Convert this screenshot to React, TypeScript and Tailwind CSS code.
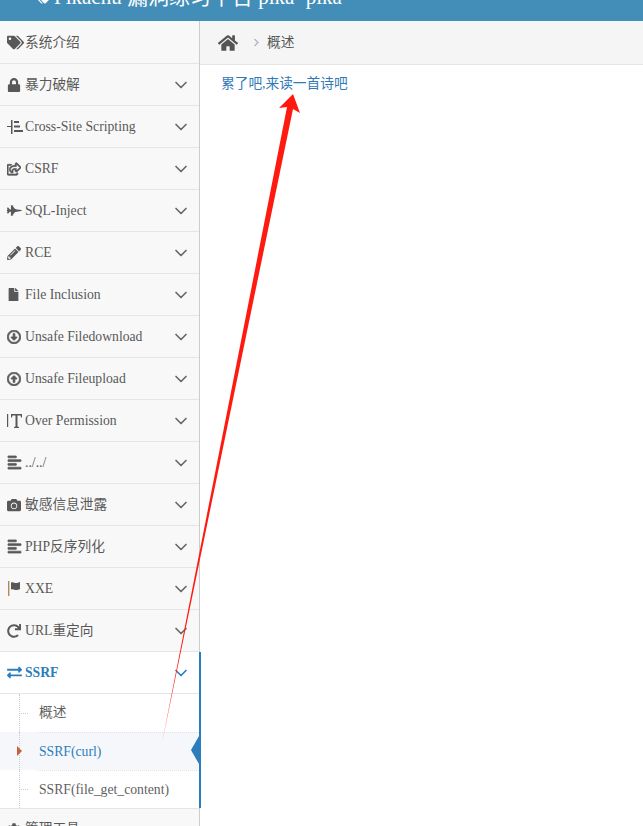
import React from 'react';
import {
  FaTags,
  FaLock,
  FaRegShareSquare,
  FaFighterJet,
  FaPencilAlt,
  FaFile,
  FaRegArrowAltCircleDown,
  FaRegArrowAltCircleUp,
  FaAlignLeft,
  FaCamera,
  FaRedo,
  FaExchangeAlt,
  FaHome,
  FaCog,
  FaChevronRight,
} from 'react-icons/fa';
import { ChevronDown } from 'lucide-react';

const font = "font-['Liberation_Serif','Noto_Sans_CJK_SC',serif]";

const XssIcon = () => (
  <svg width="16" height="14" viewBox="0 0 16 14" fill="currentColor">
    <rect x="0" y="6" width="4" height="1" />
    <rect x="4" y="0" width="1.5" height="14" />
    <rect x="7" y="1" width="5" height="2" />
    <rect x="7" y="5.5" width="6" height="2" />
    <rect x="7" y="10" width="9" height="2" />
  </svg>
);

const FlagIcon = () => (
  <svg width="14" height="15" viewBox="0 0 14 15" fill="currentColor">
    <rect x="1" y="0" width="1.4" height="15" className="text-[#b08a5a]" />
    <path d="M4 1.5c2-1 3.5 .5 5 .5s2.500-.5 4-1v7c-1.500 .6-2.500 1-4 1s-3-1.500-5-.5z" />
  </svg>
);

const TextHeightIcon = () => (
  <svg width="17" height="16" viewBox="0 0 17 16" fill="currentColor" className="-ml-px">
    <rect x="1" y="1" width="1.2" height="13" />
    <path d="M5 1h11v3.500h-1l-.5-2h-3v11l1.500.5v1h-5v-1l1.500-.5v-11h-3l-.5 2h-1z" />
  </svg>
);

const items = [
  { icon: <FaTags size={17} />, label: '系统介绍', noArrow: true },
  { icon: <FaLock size={14} />, label: '暴力破解' },
  { icon: <XssIcon />, label: 'Cross-Site Scripting' },
  { icon: <FaRegShareSquare size={14} className="stroke-current stroke-[30]" />, label: 'CSRF' },
  { icon: <FaFighterJet size={15} />, label: 'SQL-Inject' },
  { icon: <FaPencilAlt size={14} />, label: 'RCE' },
  { icon: <FaFile size={13} />, label: 'File Inclusion' },
  { icon: <FaRegArrowAltCircleDown size={14} className="stroke-current stroke-[30]" />, label: 'Unsafe Filedownload' },
  { icon: <FaRegArrowAltCircleUp size={14} className="stroke-current stroke-[30]" />, label: 'Unsafe Fileupload' },
  { icon: <TextHeightIcon />, label: 'Over Permission' },
  { icon: <FaAlignLeft size={15} className="stroke-current stroke-[25]" />, label: '../../' },
  { icon: <FaCamera size={14} />, label: '敏感信息泄露' },
  { icon: <FaAlignLeft size={15} className="stroke-current stroke-[25]" />, label: 'PHP反序列化' },
  { icon: <FlagIcon />, label: 'XXE' },
  { icon: <FaRedo size={14} />, label: 'URL重定向' },
];

type NavRowProps = {
  icon: React.ReactNode;
  label: string;
  noArrow?: boolean;
  first?: boolean;
};

const NavRow = ({ icon, label, noArrow, first }: NavRowProps) => (
  <div
    className={`shrink-0 flex items-center pl-[7px] pr-[8px] border-b border-[#e5e5e5] bg-[#f8f8f8] text-[#585858] ${
      first ? 'h-[43px] pt-px' : 'h-[42px]'
    }`}
  >
    <span className="w-[18px] flex justify-start shrink-0">{icon}</span>
    <span className="flex-1 whitespace-nowrap pt-[2px]">{label}</span>
    {!noArrow && <ChevronDown size={20} strokeWidth={2} className="text-[#666]" />}
  </div>
);

const SubRow = ({ label, active, divider }: { label: string; active?: boolean; divider?: boolean }) => (
  <div
    className={`relative h-[38px] flex items-center pl-[39px] ${
      active ? 'bg-[#f5f7fa] text-[#2b7dbc]' : 'bg-white text-[#616161]'
    }`}
  >
    <span className="absolute left-[19px] top-0 bottom-0 border-l border-dotted border-[#c5cfd8]" />
    {divider && <span className="absolute left-[38px] right-0 top-0 border-t border-dotted border-[#e4e4e4]" />}
    {active ? (
      <>
        <span className="absolute left-[17px] top-[14px] border-y-[5px] border-y-transparent border-l-[5px] border-l-[#c86139]" />
        <span className="absolute right-0 top-[4px] border-y-[14px] border-y-transparent border-r-[8px] border-r-[#2b7dbc]" />
      </>
    ) : (
      <span className="absolute left-[21px] top-[19px] w-[7px] border-t border-dotted border-[#c5cfd8]" />
    )}
    <span className={divider ? 'pt-[2px]' : ''}>{label}</span>
  </div>
);

export default function App() {
  return (
    <div className={`relative w-[643px] h-[826px] overflow-hidden bg-white text-[13.700px] ${font}`}>
      <header className="h-[21px] bg-[#438eb9] overflow-hidden flex items-start pl-[36px] text-white text-[21px] leading-[26px] whitespace-nowrap">
        <div className="flex items-center gap-[3px] -mt-[16px]">
          <FaTags size={15} className="-scale-x-100" />
          <span>Pikachu 漏洞练习平台 pika~pika~</span>
        </div>
      </header>

      <div className="flex h-[805px]">
        <aside className="w-[200px] shrink-0 flex flex-col border-r border-[#cccccc]">
          {items.map((item, i) => (
            <NavRow key={item.label} first={i === 0} {...item} />
          ))}
          <div className="border-r-2 border-[#2b7dbc] -mr-[2px]">
            <div className="h-[42px] flex items-center pl-[7px] pr-[8px] border-b border-[#e5e5e5] bg-white text-[#2b7dbc] font-bold">
              <span className="w-[18px] shrink-0">
                <FaExchangeAlt size={15} />
              </span>
              <span className="flex-1 pt-[2px]">SSRF</span>
              <ChevronDown size={20} strokeWidth={2} />
            </div>
            <SubRow label="概述" />
            <SubRow label="SSRF(curl)" active divider />
            <SubRow label="SSRF(file_get_content)" divider />
          </div>
          <div className="h-[42px] shrink-0 flex items-center pl-[7px] border-t border-[#e5e5e5] bg-[#f8f8f8] text-[#585858]">
            <span className="w-[18px] shrink-0">
              <FaCog size={14} />
            </span>
            <span>管理工具</span>
          </div>
        </aside>

        <main className="flex-1 min-w-0">
          <div className="h-[44px] flex items-center pl-[18px] bg-[#f5f5f5] border-b border-[#e5e5e5] text-[#555]">
            <FaHome size={20} className="text-[#555]" />
            <FaChevronRight size={9} className="ml-[14px] mr-[6px] text-[#b2b6bf]" />
            <span className="pt-[2px]">概述</span>
          </div>
          <div className="pt-[9px] pl-[21px] text-[#337ab7]">累了吧,来读一首诗吧</div>
        </main>
      </div>

      {/* red arrow somebody drew over the screenshot */}
      <svg className="absolute inset-0 pointer-events-none" width="643" height="826" viewBox="0 0 643 826">
        <polygon points="293,94 300,113 293,109 162,743 287,107 279,108" fill="#ff1a0f" />
      </svg>
    </div>
  );
}
